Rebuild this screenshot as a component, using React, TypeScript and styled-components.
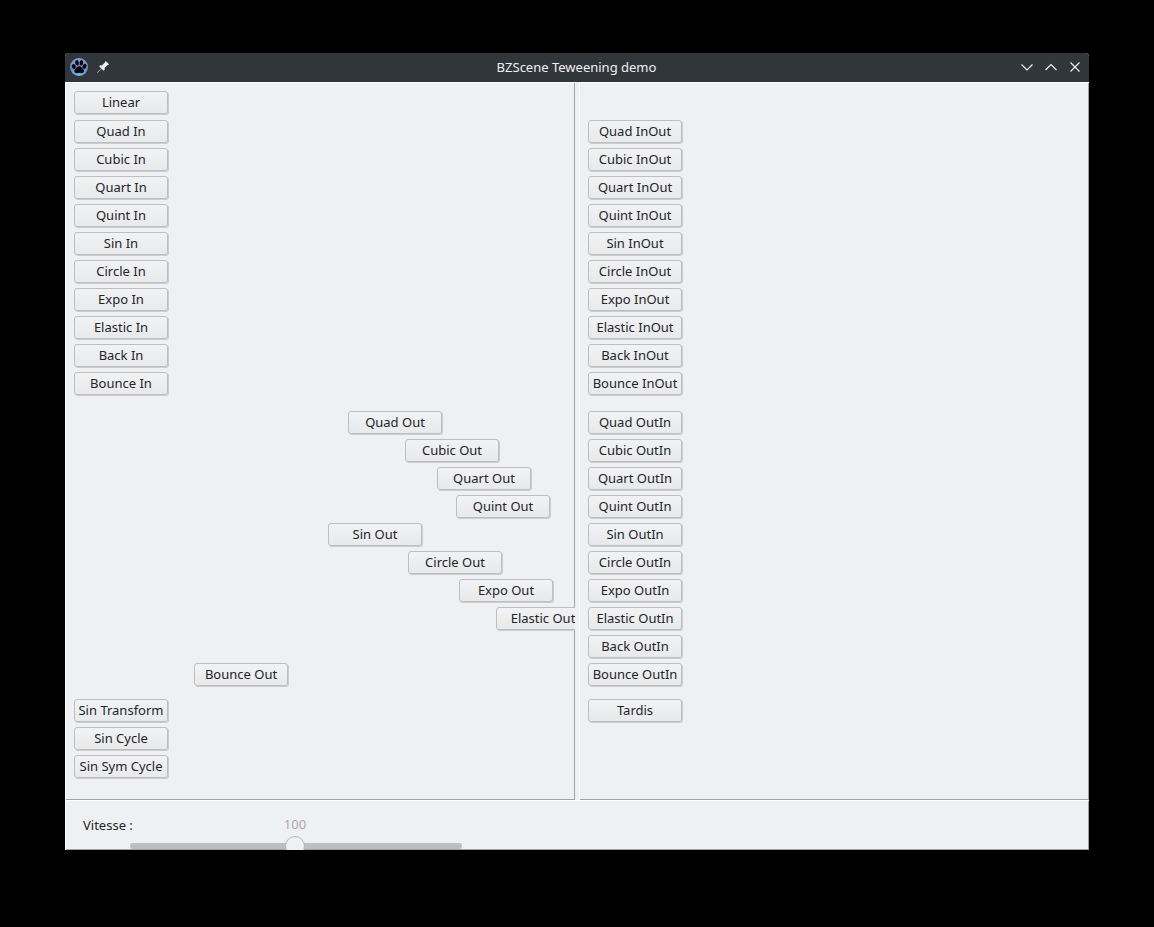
import React, { useState } from "react";
import styled, { createGlobalStyle } from "styled-components";

const GlobalStyle = createGlobalStyle`
  *, *::before, *::after { box-sizing: border-box; }
  html, body { margin: 0; background: #000; }
  body { font-family: "Noto Sans", sans-serif; font-size: 13px; color: #232629; }
`;

const Desktop = styled.div`
  min-height: 100vh;
  padding: 53px 65px 77px;
  background: #000;
  display: flex;
`;

const Window = styled.main`
  flex: 1;
  min-width: 0;
  display: flex;
  flex-direction: column;
  overflow: hidden;
  border-radius: 4px 4px 0 0;
  background: #eff0f1;
`;

const TitleBar = styled.header`
  height: 29px;
  padding: 0 6px 2px 5px;
  display: grid;
  grid-template-columns: 1fr auto 1fr;
  align-items: center;
  background: #31363b;
  color: #eff0f1;
`;

const TitleGroup = styled.div<{ $end?: boolean }>`
  display: flex;
  align-items: center;
  justify-content: ${(p) => (p.$end ? "flex-end" : "flex-start")};
  gap: ${(p) => (p.$end ? 8 : 7)}px;
`;

const Title = styled.h1`
  margin: 0;
  font-size: 13px;
  font-weight: 400;
  line-height: 20px;
`;

const WindowButton = styled.button`
  width: 16px;
  height: 18px;
  padding: 0;
  border: 0;
  background: none;
  color: #eff0f1;
  display: flex;
  align-items: center;
  justify-content: center;
`;

const Panels = styled.div`
  flex: 1;
  display: grid;
  grid-template-columns: 1fr 1fr;
  gap: 4px;
`;

const Panel = styled.section`
  min-width: 0;
  overflow: hidden;
  padding: 9px 9px 21px;
  display: flex;
  flex-direction: column;
  box-shadow: inset 1px 1px #fff, inset -1px -1px #9fa1a3;
`;

const Group = styled.div<{ $before?: number }>`
  margin-top: ${(p) => p.$before ?? 0}px;
  display: flex;
  flex-direction: column;
  gap: 4px;
`;

const Slot = styled.div`
  height: 24px;
`;

const TweenButton = styled.button`
  display: block;
  width: 94px;
  height: 23px;
  padding: 0 0 1px;
  border: 1px solid #bcbebf;
  border-radius: 3px;
  background: linear-gradient(#f1f2f3, #e8e9ea);
  box-shadow: 1px 1px 0 #cbcccd;
  color: #232629;
  font: 13px/20px "Noto Sans", sans-serif;
  white-space: nowrap;
`;

const Controls = styled.form`
  height: 50px;
  overflow: hidden;
  padding: 14px 18px 0;
  display: flex;
  align-items: flex-start;
  box-shadow: inset 1px 1px #fff, inset -1px -1px #9fa1a3;
`;

const SpeedLabel = styled.label`
  width: 47px;
  padding-top: 1px;
  line-height: 20px;
  white-space: nowrap;
`;

const Speed = styled.div`
  width: 332px;
  display: flex;
  flex-direction: column;
`;

const SpeedValue = styled.output`
  height: 22px;
  line-height: 20px;
  width: 330px;
  text-align: center;
  color: #a9abad;
`;

const Slider = styled.input`
  appearance: none;
  width: 100%;
  height: 20px;
  margin: 0;
  background: none;

  &::-webkit-slider-runnable-track {
    height: 6px;
    border-radius: 3px;
    background: #bcbebf;
  }
  &::-webkit-slider-thumb {
    appearance: none;
    width: 20px;
    height: 20px;
    margin-top: -7px;
    border: 1px solid #b4b6b7;
    border-radius: 50%;
    background: #eff0f1;
  }
`;

type Tween = { name: string; x?: number };

const names = ["Quad", "Cubic", "Quart", "Quint", "Sin", "Circle", "Expo", "Elastic", "Back", "Bounce"];
const family = (suffix: string): Tween[] => names.map((n) => ({ name: `${n} ${suffix}` }));

// "Back" has overshot its panel, so its row is empty.
const outTweens: (Tween | null)[] = [
  { name: "Quad Out", x: 274 },
  { name: "Cubic Out", x: 331 },
  { name: "Quart Out", x: 363 },
  { name: "Quint Out", x: 382 },
  { name: "Sin Out", x: 254 },
  { name: "Circle Out", x: 334 },
  { name: "Expo Out", x: 385 },
  { name: "Elastic Out", x: 422 },
  null,
  { name: "Bounce Out", x: 120 },
];

function TweenGroup({ tweens, before }: { tweens: (Tween | null)[]; before?: number }) {
  return (
    <Group $before={before}>
      {tweens.map((t, i) => (
        <Slot key={i}>
          {t && (
            <TweenButton type="button" style={{ marginLeft: t.x ?? 0 }}>
              {t.name}
            </TweenButton>
          )}
        </Slot>
      ))}
    </Group>
  );
}

function PawIcon() {
  return (
    <svg width="18" height="18" viewBox="0 0 18 18" aria-hidden="true">
      <defs>
        <linearGradient id="paw" x1="0" y1="0" x2="0" y2="1">
          <stop offset="0" stopColor="#8d9fd8" />
          <stop offset="0.6" stopColor="#6187bd" />
          <stop offset="1" stopColor="#6fc0ee" />
        </linearGradient>
      </defs>
      <circle cx="9" cy="9" r="9" fill="url(#paw)" />
      <g fill="#05070c">
        <ellipse cx="3.8" cy="8.4" rx="1.9" ry="2.5" transform="rotate(-25 3.8 8.4)" />
        <ellipse cx="7" cy="4.8" rx="1.8" ry="2.7" transform="rotate(-8 7 4.8)" />
        <ellipse cx="11.4" cy="4.8" rx="1.8" ry="2.7" transform="rotate(10 11.4 4.8)" />
        <ellipse cx="14.5" cy="8.3" rx="1.9" ry="2.5" transform="rotate(25 14.5 8.3)" />
        <path d="M9.200 8.200c2 0 2.800 1.600 4 2.900 1.500 1.600.7 4.200-1.400 4.100-1 0-1.600-.5-2.600-.5s-1.600.5-2.600.5c-2.100.1-2.900-2.500-1.400-4.100 1.200-1.300 2-2.900 4-2.900z" />
      </g>
    </svg>
  );
}

function PinIcon() {
  return (
    <svg width="12" height="12" viewBox="0 0 12 12" aria-hidden="true">
      <path fill="currentColor" d="M8.700 0L12 3.300l-1 .9-.5-.1-2.900 3 .1 1.700-1 1L4.500 7.800.8 11.600 0 12l.4-.8L4.200 7.500 2.200 5.300l1-1 1.700.1 3-2.900-.1-.5z" />
    </svg>
  );
}

function LineIcon({ d }: { d: string }) {
  return (
    <svg width="12" height="12" viewBox="0 0 12 12" fill="none" stroke="currentColor" strokeWidth="1.2" aria-hidden="true">
      <path d={d} />
    </svg>
  );
}

export default function App() {
  const [speed, setSpeed] = useState(100);
  return (
    <>
      <GlobalStyle />
      <Desktop>
        <Window>
          <TitleBar>
            <TitleGroup>
              <PawIcon />
              <WindowButton type="button" aria-label="Pin"><PinIcon /></WindowButton>
            </TitleGroup>
            <Title>BZScene Teweening demo</Title>
            <TitleGroup $end>
              <WindowButton type="button" aria-label="Minimize"><LineIcon d="M.5 3.500 6 9l5.500-5.500" /></WindowButton>
              <WindowButton type="button" aria-label="Maximize"><LineIcon d="M.5 9 6 3.500 11.500 9" /></WindowButton>
              <WindowButton type="button" aria-label="Close"><LineIcon d="M1.500 1.500l9 9M10.500 1.500l-9 9" /></WindowButton>
            </TitleGroup>
          </TitleBar>
          <Panels>
            <Panel>
              <TweenGroup tweens={[{ name: "Linear" }]} />
              <TweenGroup before={5} tweens={family("In")} />
              <TweenGroup before={15} tweens={outTweens} />
              <TweenGroup before={12} tweens={[{ name: "Sin Transform" }, { name: "Sin Cycle" }, { name: "Sin Sym Cycle" }]} />
            </Panel>
            <Panel>
              <TweenGroup before={29} tweens={family("InOut")} />
              <TweenGroup before={15} tweens={family("OutIn")} />
              <TweenGroup before={12} tweens={[{ name: "Tardis" }]} />
            </Panel>
          </Panels>
          <Controls>
            <SpeedLabel htmlFor="speed">Vitesse :</SpeedLabel>
            <Speed>
              <SpeedValue htmlFor="speed">{speed}</SpeedValue>
              <Slider id="speed" type="range" min={1} max={200} value={speed} onChange={(e) => setSpeed(Number(e.target.value))} />
            </Speed>
          </Controls>
        </Window>
      </Desktop>
    </>
  );
}
